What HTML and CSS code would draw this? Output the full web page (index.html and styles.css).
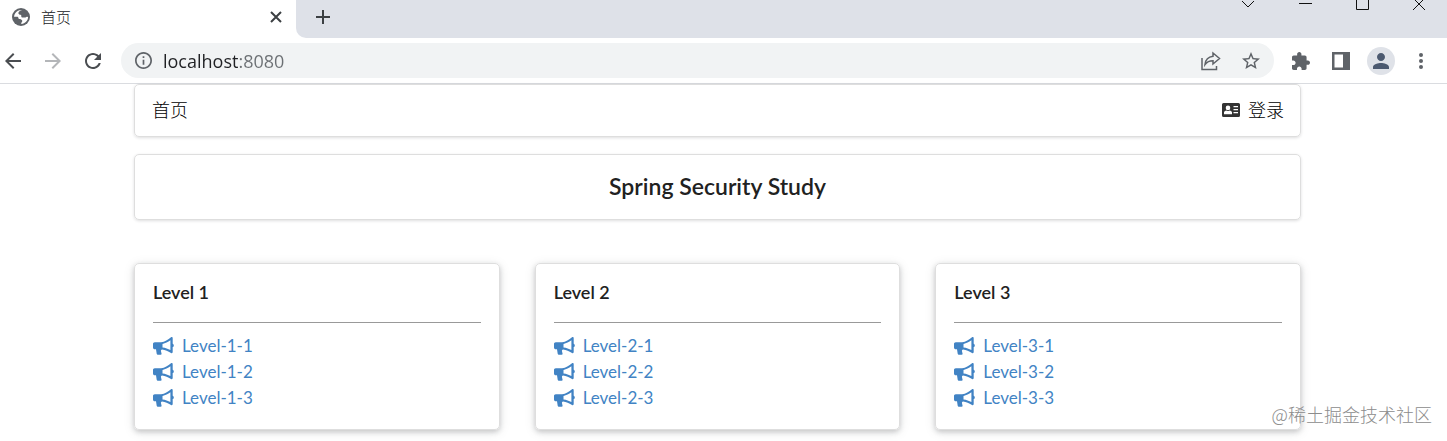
FILE: index.html
```html
<!DOCTYPE html>
<html lang="zh-CN">

<head>
    <meta charset="UTF-8">
    <meta name="viewport" content="width=device-width, initial-scale=1.0">
    <title>首页</title>
    <link rel="stylesheet" href="styles.css">
</head>

<body>
    <svg class="sprite" aria-hidden="true">
        <symbol id="bullhorn" viewBox="0 0 21 18">
            <path fill-rule="evenodd" d="M18 .3c.9-.5 1.700 0 1.700.9v5.600c.7.200 1.100.9 1.100 1.700s-.4 1.400-1.100 1.600v5c0 .9-.8 1.400-1.700.9-3-2-5.700-3.100-9-3.500-.9.200-1.300 1-1 1.700l.5 2.300c.3.8-.1 1.300-.9 1.300H4.800c-.6 0-1-.4-1.100-1l-.7-4.500H1.800C.7 12.300 0 11.600 0 10.500V7c0-1.100.7-1.800 1.800-1.800H8C11.800 5 15 2.700 18 .3zM17.400 3.300C14.900 5.100 12.400 6.400 9.500 6.900v3.500c2.900.3 5.500 1.300 7.900 2.700z"/>
        </symbol>
    </svg>

    <header class="browser">
        <div class="tab-strip">
            <div class="tab">
                <svg class="tab-icon" viewBox="0 0 18 18"><circle cx="9" cy="9" r="9"/><path fill="#fff" d="M10 2c-2 .6-3.500 1.600-3.600 3 0 1.300 1 1.700 2.200 1.800.6.100.8.600.7 1.200-.2 1 .5 1.500 1.500 1.500h2c1 0 1.300-.6 2-.8.700-.2 1.300 0 1.300.6-.2 3.500-3 6.400-6.600 6.700-.5-.6-.3-1.300.2-1.800.7-.7.8-1.500.1-2.200-.7-.6-1.300-.9-2-.9-.9 0-1.400-.5-1.400-1.200 0-.8-.6-1.200-1.400-1.200H2c.1-1.300.6-2.700 1.400-3.700C5 3 7.300 1.700 10 2z"/></svg>
                <span class="tab-title">首页</span>
                <button class="tab-close" aria-label="关闭标签页"><svg viewBox="0 0 12 12"><path d="M1 1l10 10M11 1L1 11"/></svg></button>
            </div>
            <div class="strip-rest">
                <button class="new-tab" aria-label="新标签页"><svg viewBox="0 0 16 16"><path d="M8 1v14M1 8h14"/></svg></button>
                <div class="window-controls">
                    <button aria-label="搜索标签页"><svg viewBox="0 0 14 10"><path d="M1 1l6 6 6-6"/></svg></button>
                    <button aria-label="最小化"><svg viewBox="0 0 14 10"><path d="M1 3.500h13"/></svg></button>
                    <button aria-label="最大化"><svg viewBox="0 0 14 10"><path d="M1.500-3v12.500h12V-3"/></svg></button>
                    <button aria-label="关闭"><svg viewBox="0 0 14 10"><path d="M1-2l12 12M13-2L1 10"/></svg></button>
                </div>
            </div>
        </div>

        <div class="toolbar">
            <nav class="history">
                <button aria-label="后退"><svg viewBox="0 0 24 24"><path d="M20 11H7.830l5.590-5.590L12 4l-8 8 8 8 1.410-1.410L7.830 13H20v-2z"/></svg></button>
                <button class="disabled" aria-label="前进"><svg viewBox="0 0 24 24"><path d="M12 4l-1.410 1.410L16.170 11H4v2h12.170l-5.580 5.590L12 20l8-8z"/></svg></button>
                <button aria-label="刷新"><svg viewBox="0 0 24 24"><path d="M17.650 6.350C16.200 4.900 14.210 4 12 4c-4.420 0-7.990 3.580-7.990 8s3.570 8 7.990 8c3.730 0 6.840-2.550 7.730-6h-2.080c-.820 2.330-3.040 4-5.650 4-3.310 0-6-2.690-6-6s2.690-6 6-6c1.660 0 3.140.690 4.220 1.780L13 11h7V4l-2.350 2.350z"/></svg></button>
            </nav>
            <div class="address-bar">
                <svg class="site-info" viewBox="2 2 20 20"><path d="M11 7h2v2h-2zm0 4h2v6h-2zm1-9C6.480 2 2 6.480 2 12s4.480 10 10 10 10-4.480 10-10S17.520 2 12 2zm0 18c-4.410 0-8-3.590-8-8s3.590-8 8-8 8 3.590 8 8-3.590 8-8 8z"/></svg>
                <input class="url" type="text" value="localhost:8080" aria-label="地址">
                <button class="tool" aria-label="分享"><svg class="share" viewBox="0 0 20 20"><path d="M1 7v11.500h14.500V15M12 2l6.500 5.500L12 13V9.700c-3.500 0-6 1.100-8 3.800.5-4.500 3.500-7.700 8-8.200V2z"/></svg></button>
                <button class="tool" aria-label="收藏"><svg class="star" viewBox="2 2 20 20"><path d="M22 9.240l-7.190-.620L12 2 9.190 8.630 2 9.240l5.460 4.730L5.820 21 12 17.270 18.180 21l-1.630-7.030L22 9.240zM12 15.400l-3.760 2.270 1-4.280-3.320-2.880 4.380-.380L12 6.100l1.710 4.040 4.380.380-3.320 2.880 1 4.280L12 15.400z"/></svg></button>
            </div>
            <div class="actions">
                <button class="tool" aria-label="扩展程序"><svg viewBox="2 1 21 21"><path d="M20.500 11H19V7c0-1.100-.900-2-2-2h-4V3.500C13 2.120 11.880 1 10.500 1S8 2.120 8 3.500V5H4c-1.100 0-1.990.900-1.990 2v3.800H3.500c1.490 0 2.700 1.210 2.700 2.700s-1.210 2.700-2.700 2.700H2V20c0 1.100.900 2 2 2h3.800v-1.500c0-1.490 1.210-2.700 2.700-2.700 1.490 0 2.700 1.210 2.700 2.700V22H17c1.100 0 2-.900 2-2v-4h1.500c1.380 0 2.500-1.120 2.500-2.500S21.880 11 20.500 11z"/></svg></button>
                <button class="tool" aria-label="侧边栏"><svg viewBox="0 0 18 18"><path fill-rule="evenodd" d="M0 0h18v18H0zM2.500 2.500v13H11v-13z"/></svg></button>
                <button class="tool" aria-label="用户"><span class="avatar"><svg viewBox="4 4 16 16"><path d="M12 12c2.210 0 4-1.790 4-4s-1.790-4-4-4-4 1.790-4 4 1.790 4 4 4zm0 2c-2.670 0-8 1.340-8 4v2h16v-2c0-2.660-5.330-4-8-4z"/></svg></span></button>
                <button class="tool" aria-label="菜单"><svg viewBox="0 0 18 18"><circle cx="9" cy="3" r="2"/><circle cx="9" cy="9" r="2"/><circle cx="9" cy="15" r="2"/></svg></button>
            </div>
        </div>
    </header>

    <main class="page">
        <div class="container">
            <nav class="segment menu">
                <a href="#">首页</a>
                <a href="#" class="login">
                    <svg viewBox="0 0 18 14"><path fill-rule="evenodd" d="M1.500 0h15A1.500 1.500 0 0 1 18 1.500v11a1.500 1.500 0 0 1-1.500 1.500h-15A1.500 1.500 0 0 1 0 12.500v-11A1.500 1.500 0 0 1 1.500 0zM6 2.600a2.300 2.300 0 1 0 0 4.600 2.300 2.300 0 0 0 0-4.600zM2 11.200h8V9.600C10 8.500 8.800 7.700 7.600 7.600a3 3 0 0 1-3.200 0C3.200 7.700 2 8.500 2 9.600zM11.500 3v1.200H16V3zm0 3v1.200H16V6zm0 3v1.200H16V9z"/></svg>登录
                </a>
            </nav>

            <div class="segment title">
                <h3>Spring Security Study</h3>
            </div>

            <div class="levels">
                <div class="card">
                    <h5>Level 1</h5>
                    <hr>
                    <a href="#"><svg><use href="#bullhorn"/></svg>Level-1-1</a>
                    <a href="#"><svg><use href="#bullhorn"/></svg>Level-1-2</a>
                    <a href="#"><svg><use href="#bullhorn"/></svg>Level-1-3</a>
                </div>
                <div class="card">
                    <h5>Level 2</h5>
                    <hr>
                    <a href="#"><svg><use href="#bullhorn"/></svg>Level-2-1</a>
                    <a href="#"><svg><use href="#bullhorn"/></svg>Level-2-2</a>
                    <a href="#"><svg><use href="#bullhorn"/></svg>Level-2-3</a>
                </div>
                <div class="card">
                    <h5>Level 3</h5>
                    <hr>
                    <a href="#"><svg><use href="#bullhorn"/></svg>Level-3-1</a>
                    <a href="#"><svg><use href="#bullhorn"/></svg>Level-3-2</a>
                    <a href="#"><svg><use href="#bullhorn"/></svg>Level-3-3</a>
                </div>
            </div>
        </div>
    </main>

    <div class="watermark">@稀土掘金技术社区</div>
</body>

</html>
```

FILE: styles.css
```css
* {
    box-sizing: border-box;
}

body {
    position: relative;
    min-height: 100vh;
    margin: 0;
    background: #fff;
    color: #212121;
    font-family: Lato, "Noto Sans CJK SC", sans-serif;
    font-size: 18px;
    line-height: 26px;
}

button {
    display: flex;
    align-items: center;
    justify-content: center;
    padding: 0;
    border: none;
    background: none;
    cursor: pointer;
}

svg {
    display: block;
    flex: none;
}

.sprite {
    display: none;
}

/* browser bar */
.browser {
    border-bottom: 1px solid #dadce0;
    font-family: "Open Sans", "Noto Sans CJK SC", sans-serif;
}

.tab-strip {
    display: flex;
    height: 38px;
}

.tab {
    display: flex;
    align-items: center;
    width: 296px;
    padding: 0 14px 4px 12px;
    font-size: 15px;
}

.tab-icon {
    width: 18px;
    height: 18px;
    margin-right: 11px;
    fill: #5f6368;
}

.tab-title {
    flex: 1;
    color: #202124;
    font-weight: 300;
}

.tab-close svg {
    width: 12px;
    height: 12px;
    stroke: #3c4043;
    stroke-width: 2;
}

.strip-rest {
    flex: 1;
    display: flex;
    justify-content: space-between;
    align-items: flex-start;
    background: #dee1e8;
    border-bottom-left-radius: 10px;
}

.new-tab {
    width: 54px;
    height: 34px;
}

.new-tab svg {
    width: 16px;
    height: 16px;
    stroke: #3c4043;
    stroke-width: 2;
}

.window-controls {
    display: flex;
}

.window-controls button {
    width: 57px;
}

.window-controls svg {
    width: 14px;
    height: 10px;
    fill: none;
    stroke: #111;
}

.toolbar {
    display: flex;
    align-items: center;
    height: 45px;
    padding: 0 6px 0 1px;
}

.history {
    display: flex;
    gap: 16px;
}

.history svg {
    width: 24px;
    height: 24px;
    fill: #4a4d51;
}

.history .disabled svg {
    fill: #b4b6b9;
}

.address-bar {
    flex: 1;
    display: flex;
    align-items: center;
    height: 35px;
    margin: 0 7px 0 16px;
    padding: 0 3px 0 14px;
    border-radius: 18px;
    background: #f1f3f4;
}

.site-info {
    width: 17px;
    height: 17px;
    fill: #5f6368;
}

/* host is dark, port is grey */
.url {
    flex: 1;
    margin-left: 11px;
    padding: 0;
    border: none;
    outline: none;
    background: linear-gradient(to right, #202124 76px, #6b6f73 76px);
    -webkit-background-clip: text;
    background-clip: text;
    color: transparent;
    font-family: inherit;
    font-size: 18px;
    line-height: 26px;
}

.tool {
    width: 40px;
    height: 35px;
}

.tool svg {
    width: 18px;
    height: 18px;
    fill: #5f6368;
}

.tool .share {
    width: 20px;
    height: 20px;
    fill: none;
    stroke: #5f6368;
    stroke-width: 1.5;
}

.actions {
    display: flex;
}

.avatar {
    display: flex;
    align-items: center;
    justify-content: center;
    width: 28px;
    height: 28px;
    border-radius: 50%;
    background: #dfe2e8;
}

.avatar svg {
    width: 16px;
    height: 16px;
    fill: #4c5a70;
}

/* page */
.page {
    padding-right: 12px;
}

.container {
    max-width: 1167px;
    margin: 0 auto;
}

.segment {
    border: 1px solid #dedede;
    border-radius: 5px;
    box-shadow: 0 1px 3px rgba(34, 36, 38, 0.15);
}

.menu {
    display: flex;
    justify-content: space-between;
    align-items: center;
    padding: 12px 16px 13px 17px;
    font-weight: 300;
}

.menu a {
    color: #000;
    text-decoration: none;
}

.login {
    display: flex;
    align-items: center;
    gap: 8px;
}

.login svg {
    width: 18px;
    height: 14px;
    fill: #333;
}

.title {
    margin-top: 17px;
    padding: 18px 19px 20px;
    text-align: center;
}

.title h3 {
    margin: 0;
    font-size: 23px;
    font-weight: 600;
    line-height: 26px;
}

.levels {
    display: grid;
    grid-template-columns: repeat(3, 1fr);
    gap: 35px;
    margin-top: 43px;
}

.card {
    padding: 17px 18px 18px;
    border: 1px solid #dedede;
    border-radius: 5px;
    box-shadow: 0 2px 5px rgba(34, 36, 38, 0.2), 0 2px 12px rgba(34, 36, 38, 0.1);
}

.card h5 {
    margin: 0;
    font-size: 18px;
    font-weight: 600;
    line-height: 22px;
}

.card hr {
    height: 1px;
    margin: 19px 0 10px;
    border: none;
    background: #999;
}

.card a {
    display: flex;
    align-items: center;
    color: #4183c4;
    font-size: 17px;
    text-decoration: none;
}

.card a svg {
    width: 21px;
    height: 18px;
    margin-right: 8px;
    fill: #4183c4;
}

.watermark {
    position: absolute;
    right: 15px;
    bottom: 14px;
    color: #8c8c8c;
    font-family: "Noto Sans CJK SC", sans-serif;
    font-weight: 300;
}
```
